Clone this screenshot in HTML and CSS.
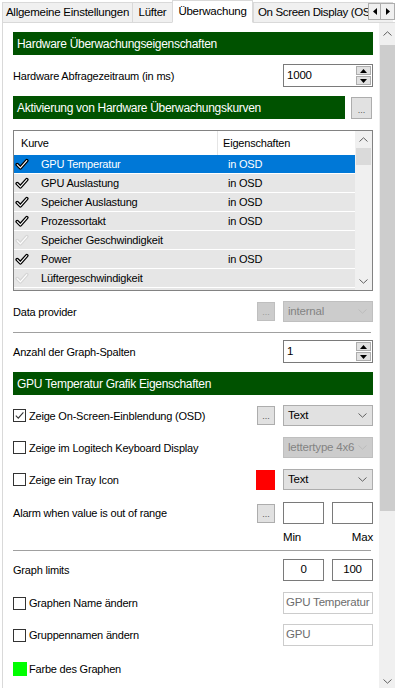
FILE: index.html
```html
<!DOCTYPE html>
<html lang="de">
<head>
<meta charset="utf-8">
<link rel="stylesheet" href="styles.css">
</head>
<body>
<div class="tabs">
  <div class="tab t1">Allgemeine Einstellungen</div>
  <div class="tab t2">Lüfter</div>
  <div class="tab active t3">Überwachung</div>
  <div class="tab t4">On Screen Display (OSD)</div>
  <div class="tabfill"></div>
  <div class="tabarrows">
    <span class="tarr"><svg width="4" height="7" viewBox="0 0 4 7"><path d="M4 0 L0 3.5 L4 7 Z" fill="#000"/></svg></span>
    <span class="tarr"><svg width="4" height="7" viewBox="0 0 4 7"><path d="M0 0 L4 3.5 L0 7 Z" fill="#000"/></svg></span>
  </div>
</div>
<div class="main">
  <div class="page">
    <div class="ghead">Hardware Überwachungseigenschaften</div>

    <div class="row r-poll">
      <span class="lbl">Hardware Abfragezeitraum (in ms)</span>
      <span></span>
      <div class="spin"><span class="spinval">1000</span><span class="spinbtns"><span class="sb"><svg width="7" height="4" viewBox="0 0 7 4"><path d="M0 4 L3.5 0 L7 4 Z" fill="#000"/></svg></span><span class="sb"><svg width="7" height="4" viewBox="0 0 7 4"><path d="M0 0 L3.5 4 L7 0 Z" fill="#000"/></svg></span></span></div>
    </div>

    <div class="hrow">
      <div class="ghead ghead-short">Aktivierung von Hardware Überwachungskurven</div>
      <div class="btn btn-big">...</div>
    </div>

    <div class="list">
      <div class="lcols">
        <div class="lhead"><span class="hc1">Kurve</span><span class="hc2">Eigenschaften</span></div>
        <div class="lrow sel"><span class="c1"><svg class="chk" width="14" height="13" viewBox="0 0 14 13"><path d="M2.2 6.6 L5.4 9.8 L11.8 2.6" fill="none" stroke="#000" stroke-width="3.6" stroke-linecap="round" stroke-linejoin="round"/><path d="M2.2 6.6 L5.4 9.8 L11.8 2.6" fill="none" stroke="#fff" stroke-width="1.1" stroke-linecap="round" stroke-linejoin="round"/></svg><span class="ltxt">GPU Temperatur</span></span><span class="c2">in OSD</span></div>
        <div class="lrow"><span class="c1"><svg class="chk" width="14" height="13" viewBox="0 0 14 13"><path d="M2.2 6.6 L5.4 9.8 L11.8 2.6" fill="none" stroke="#000" stroke-width="3.6" stroke-linecap="round" stroke-linejoin="round"/><path d="M2.2 6.6 L5.4 9.8 L11.8 2.6" fill="none" stroke="#fff" stroke-width="1.1" stroke-linecap="round" stroke-linejoin="round"/></svg><span class="ltxt">GPU Auslastung</span></span><span class="c2">in OSD</span></div>
        <div class="lrow"><span class="c1"><svg class="chk" width="14" height="13" viewBox="0 0 14 13"><path d="M2.2 6.6 L5.4 9.8 L11.8 2.6" fill="none" stroke="#000" stroke-width="3.6" stroke-linecap="round" stroke-linejoin="round"/><path d="M2.2 6.6 L5.4 9.8 L11.8 2.6" fill="none" stroke="#fff" stroke-width="1.1" stroke-linecap="round" stroke-linejoin="round"/></svg><span class="ltxt">Speicher Auslastung</span></span><span class="c2">in OSD</span></div>
        <div class="lrow"><span class="c1"><svg class="chk" width="14" height="13" viewBox="0 0 14 13"><path d="M2.2 6.6 L5.4 9.8 L11.8 2.6" fill="none" stroke="#000" stroke-width="3.6" stroke-linecap="round" stroke-linejoin="round"/><path d="M2.2 6.6 L5.4 9.8 L11.8 2.6" fill="none" stroke="#fff" stroke-width="1.1" stroke-linecap="round" stroke-linejoin="round"/></svg><span class="ltxt">Prozessortakt</span></span><span class="c2">in OSD</span></div>
        <div class="lrow"><span class="c1"><svg class="chk" width="14" height="13" viewBox="0 0 14 13"><path d="M2.2 6.6 L5.4 9.8 L11.8 2.6" fill="none" stroke="#d6d6d6" stroke-width="3.6" stroke-linecap="round" stroke-linejoin="round"/><path d="M2.2 6.6 L5.4 9.8 L11.8 2.6" fill="none" stroke="#fff" stroke-width="1.1" stroke-linecap="round" stroke-linejoin="round"/></svg><span class="ltxt">Speicher Geschwindigkeit</span></span><span class="c2"></span></div>
        <div class="lrow"><span class="c1"><svg class="chk" width="14" height="13" viewBox="0 0 14 13"><path d="M2.2 6.6 L5.4 9.8 L11.8 2.6" fill="none" stroke="#000" stroke-width="3.6" stroke-linecap="round" stroke-linejoin="round"/><path d="M2.2 6.6 L5.4 9.8 L11.8 2.6" fill="none" stroke="#fff" stroke-width="1.1" stroke-linecap="round" stroke-linejoin="round"/></svg><span class="ltxt">Power</span></span><span class="c2">in OSD</span></div>
        <div class="lrow"><span class="c1"><svg class="chk" width="14" height="13" viewBox="0 0 14 13"><path d="M2.2 6.6 L5.4 9.8 L11.8 2.6" fill="none" stroke="#d6d6d6" stroke-width="3.6" stroke-linecap="round" stroke-linejoin="round"/><path d="M2.2 6.6 L5.4 9.8 L11.8 2.6" fill="none" stroke="#fff" stroke-width="1.1" stroke-linecap="round" stroke-linejoin="round"/></svg><span class="ltxt">Lüftergeschwindigkeit</span></span><span class="c2"></span></div>
        <div class="lrow"><span class="c1"><svg class="chk" width="14" height="13" viewBox="0 0 14 13"><path d="M2.2 6.6 L5.4 9.8 L11.8 2.6" fill="none" stroke="#000" stroke-width="3.6" stroke-linecap="round" stroke-linejoin="round"/><path d="M2.2 6.6 L5.4 9.8 L11.8 2.6" fill="none" stroke="#fff" stroke-width="1.1" stroke-linecap="round" stroke-linejoin="round"/></svg></span><span class="c2"></span></div>
      </div>
      <div class="lscroll">
        <span class="sarrow"><svg width="9" height="5" viewBox="0 0 9 5"><path d="M0.5 4.5 L4.5 0.8 L8.5 4.5" fill="none" stroke="#606060" stroke-width="1"/></svg></span>
        <span class="lthumb"></span>
        <span class="lspace"></span>
        <span class="sarrow"><svg width="9" height="5" viewBox="0 0 9 5"><path d="M0.5 0.5 L4.5 4.2 L8.5 0.5" fill="none" stroke="#606060" stroke-width="1"/></svg></span>
      </div>
    </div>

    <div class="row r-prov">
      <span class="lbl">Data provider</span>
      <div class="btn btn-dis">...</div>
      <div class="combo combo-dis"><span>internal</span><svg width="9" height="5" viewBox="0 0 9 5"><path d="M0.5 0.5 L4.5 4.2 L8.5 0.5" fill="none" stroke="#bcbcbc" stroke-width="1"/></svg></div>
    </div>

    <div class="sep sep1"></div>

    <div class="row r-cols">
      <span class="lbl">Anzahl der Graph-Spalten</span>
      <span></span>
      <div class="spin"><span class="spinval">1</span><span class="spinbtns"><span class="sb"><svg width="7" height="4" viewBox="0 0 7 4"><path d="M0 4 L3.5 0 L7 4 Z" fill="#000"/></svg></span><span class="sb"><svg width="7" height="4" viewBox="0 0 7 4"><path d="M0 0 L3.5 4 L7 0 Z" fill="#000"/></svg></span></span></div>
    </div>

    <div class="ghead ghead3">GPU Temperatur Grafik Eigenschaften</div>

    <div class="row r-osd">
      <span class="lbl cbl"><span class="cb"><svg width="11" height="11" viewBox="0 0 11 11"><path d="M1.8 5.6 L4.3 8.1 L9.4 2.4" fill="none" stroke="#333" stroke-width="1.1"/></svg></span>Zeige On-Screen-Einblendung (OSD)</span>
      <div class="btn">...</div>
      <div class="combo"><span>Text</span><svg width="9" height="5" viewBox="0 0 9 5"><path d="M0.5 0.5 L4.5 4.2 L8.5 0.5" fill="none" stroke="#606060" stroke-width="1"/></svg></div>
    </div>

    <div class="row r-logi">
      <span class="lbl cbl"><span class="cb"></span>Zeige im Logitech Keyboard Display</span>
      <span></span>
      <div class="combo combo-dis"><span>lettertype 4x6</span><svg width="9" height="5" viewBox="0 0 9 5"><path d="M0.5 0.5 L4.5 4.2 L8.5 0.5" fill="none" stroke="#bcbcbc" stroke-width="1"/></svg></div>
    </div>

    <div class="row r-tray">
      <span class="lbl cbl"><span class="cb"></span>Zeige ein Tray Icon</span>
      <div class="swatch-red"></div>
      <div class="combo"><span>Text</span><svg width="9" height="5" viewBox="0 0 9 5"><path d="M0.5 0.5 L4.5 4.2 L8.5 0.5" fill="none" stroke="#606060" stroke-width="1"/></svg></div>
    </div>

    <div class="row r-alarm">
      <span class="lbl">Alarm when value is out of range</span>
      <div class="btn">...</div>
      <div class="pair"><span class="box"></span><span class="box"></span></div>
    </div>

    <div class="row r-minmax">
      <span></span>
      <span></span>
      <div class="minmax"><span>Min</span><span>Max</span></div>
    </div>

    <div class="sep sep2"></div>

    <div class="row r-limits">
      <span class="lbl">Graph limits</span>
      <span></span>
      <div class="pair"><span class="box">0</span><span class="box">100</span></div>
    </div>

    <div class="row r-name">
      <span class="lbl cbl"><span class="cb"></span>Graphen Name ändern</span>
      <span></span>
      <div class="tbox-dis">GPU Temperatur</div>
    </div>

    <div class="row r-group">
      <span class="lbl cbl"><span class="cb"></span>Gruppennamen ändern</span>
      <span></span>
      <div class="tbox-dis">GPU</div>
    </div>

    <div class="colorrow"><span class="swatch-green"></span>Farbe des Graphen</div>
  </div>

  <div class="vscroll">
    <span class="varrow varrow-up"><svg width="9" height="5" viewBox="0 0 9 5"><path d="M0.5 4.5 L4.5 0.8 L8.5 4.5" fill="none" stroke="#606060" stroke-width="1"/></svg></span>
    <span class="vthumb"></span>
    <span class="vspace"></span>
    <span class="varrow"><svg width="9" height="5" viewBox="0 0 9 5"><path d="M0.5 0.5 L4.5 4.2 L8.5 0.5" fill="none" stroke="#606060" stroke-width="1"/></svg></span>
  </div>
</div>
</body>
</html>
```

FILE: styles.css
```css
* { box-sizing: border-box; }

body {
  margin: 0;
  width: 395px;
  height: 688px;
  overflow: hidden;
  background: #fff;
  font-family: "Liberation Sans", Arial, sans-serif;
  font-size: 11px;
  letter-spacing: -0.2px;
  color: #000;
}

/* ---------- tab strip ---------- */
.tabs {
  position: relative;
  display: flex;
  align-items: flex-end;
  height: 23px;
  padding-left: 2px;
  overflow: hidden;
}

.tab {
  flex: none;
  height: 21px;
  display: flex;
  align-items: center;
  justify-content: center;
  background: #f0f0f0;
  border: 1px solid #d9d9d9;
  border-right: none;
  white-space: nowrap;
  font-size: 11.5px;
  letter-spacing: -0.25px;
  padding-bottom: 1px;
}

.t1 { width: 130px; }
.t2 { width: 40px; }
.t3 { width: 81px; }
.t4 { width: 140px; justify-content: flex-start; padding-left: 4px; letter-spacing: -0.35px; }

.tab.active {
  height: 23px;
  background: #fff;
  border-right: 1px solid #d9d9d9;
  border-bottom-color: #fff;
  padding-bottom: 2px;
}

.tabfill {
  flex: 1;
  height: 1px;
  background: #d9d9d9;
}

.tabarrows {
  position: absolute;
  top: 3px;
  right: 0;
  display: flex;
  background: #fff;
}

.tarr {
  width: 13px;
  height: 17px;
  display: flex;
  align-items: center;
  justify-content: center;
  background: #f0f0f0;
  border: 1px solid #adadad;
}
.tarr + .tarr { width: 14px; border-left: none; }

/* ---------- main ---------- */
.main {
  display: flex;
  height: 667px;
  padding-left: 2px;
}

.page {
  width: 377px;
  border-left: 1px solid #d9d9d9;
  padding: 9px 6px 0 10px;
  display: flex;
  flex-direction: column;
}

.ghead {
  height: 23px;
  background: #005200;
  color: #fff;
  font-size: 12px;
  letter-spacing: -0.3px;
  padding-left: 4px;
  display: flex;
  align-items: center;
  white-space: nowrap;
}

.hrow {
  display: flex;
  align-items: center;
  margin-top: 9px;
  height: 23px;
}
.ghead-short { width: 332px; }

.row {
  display: grid;
  grid-template-columns: 1fr 18px 90px;
  column-gap: 8px;
  align-items: center;
}

.lbl { white-space: nowrap; }

.cbl { display: flex; align-items: center; }

.cb {
  width: 13px;
  height: 13px;
  border: 1px solid #333;
  background: #fff;
  margin-right: 3px;
  display: flex;
  align-items: center;
  justify-content: center;
  flex: none;
}

.r-poll { margin-top: 9px; height: 23px; }
.r-prov { margin-top: 10px; height: 21px; }
.r-cols { margin-top: 7px; height: 23px; }
.ghead3 { margin-top: 9px; }
.r-osd { margin-top: 10px; height: 21px; }
.r-logi { margin-top: 11px; height: 21px; }
.r-tray { margin-top: 11px; height: 21px; }
.r-alarm { margin-top: 12px; height: 22px; }
.r-minmax { margin-top: 5px; height: 15px; }
.r-limits { margin-top: 8px; height: 22px; }
.r-name { margin-top: 11px; height: 22px; }
.r-group { margin-top: 10px; height: 22px; }

.sep { height: 1px; background: #a0a0a0; width: 358px; }
.sep1 { margin-top: 10px; }
.sep2 { margin-top: 6px; }

/* spin box */
.spin {
  height: 23px;
  border: 1px solid #7a7a7a;
  background: #fff;
  display: flex;
  align-items: center;
  justify-content: space-between;
  padding: 0 1px 0 3px;
}
.spinval { padding-bottom: 2px; font-size: 11.5px; }
.spinbtns {
  display: flex;
  flex-direction: column;
  gap: 1px;
  width: 15px;
}
.sb {
  height: 9px;
  background: #e1e1e1;
  border: 1px solid #adadad;
  display: flex;
  align-items: center;
  justify-content: center;
}

/* buttons */
.btn {
  width: 18px;
  height: 19px;
  background: #e1e1e1;
  border: 1px solid #adadad;
  color: #555;
  font-size: 9px;
  letter-spacing: 0;
  display: flex;
  align-items: flex-end;
  justify-content: center;
  padding-bottom: 3px;
  line-height: 1;
}
.btn-big { width: 21px; height: 22px; margin-left: 6px; }
.btn-dis { background: #cccccc; border-color: #bfbfbf; color: #9a9a9a; }

/* combo */
.combo {
  height: 21px;
  background: #e1e1e1;
  border: 1px solid #adadad;
  display: flex;
  align-items: center;
  justify-content: space-between;
  padding: 0 5px 1px 4px;
  font-size: 11.5px;
  white-space: nowrap;
}
.combo svg { flex: none; margin-top: 1px; }
.combo-dis { background: #cccccc; border-color: #bfbfbf; color: #838383; }

.swatch-red {
  width: 19px;
  height: 20px;
  background: #ff0000;
  margin-left: -1px;
}

.pair {
  display: flex;
  justify-content: space-between;
  height: 22px;
}
.box {
  width: 41px;
  height: 22px;
  border: 1px solid #7a7a7a;
  background: #fff;
  display: flex;
  align-items: center;
  justify-content: center;
  padding-bottom: 3px;
  font-size: 11.5px;
}

.minmax {
  display: flex;
  justify-content: space-between;
  font-size: 11.5px;
}

.tbox-dis {
  height: 22px;
  border: 1px solid #cccccc;
  background: #fff;
  color: #6d6d6d;
  padding: 3px 0 0 2px;
  white-space: nowrap;
  font-size: 11.5px;
}

.colorrow {
  margin-top: 15px;
  height: 15px;
  display: flex;
  align-items: center;
}
.swatch-green {
  width: 14px;
  height: 14px;
  background: #00ff00;
  margin-right: 2px;
}

/* ---------- list ---------- */
.list {
  margin-top: 11px;
  height: 161px;
  width: 360px;
  border: 1px solid #828282;
  display: flex;
  overflow: hidden;
}

.lcols { width: 341px; flex: none; }

.lhead {
  height: 24px;
  display: flex;
  align-items: center;
  background: #fff;
}
.hc1 {
  width: 204px;
  height: 100%;
  display: flex;
  align-items: center;
  padding-left: 7px;
  border-right: 1px solid #e5e5e5;
}
.hc2 { padding-left: 5px; }

.lrow {
  height: 19px;
  border-bottom: 1px solid #fff;
  background: #e6e6e6;
  display: flex;
  align-items: center;
}
.lrow.sel { background: #0078d7; color: #fff; }

.c1 {
  width: 214px;
  display: flex;
  align-items: center;
}
.chk { margin-left: 1px; margin-right: 12px; flex: none; }

.lscroll {
  width: 17px;
  background: #f0f0f0;
  display: flex;
  flex-direction: column;
}
.sarrow {
  height: 17px;
  flex: none;
  display: flex;
  align-items: center;
  justify-content: center;
}
.lthumb {
  height: 17px;
  margin: 0 1px;
  background: #dadada;
  flex: none;
}
.lspace { flex: 1; }

/* ---------- page scrollbar ---------- */
.vscroll {
  width: 16px;
  background: #f0f0f0;
  display: flex;
  flex-direction: column;
}
.varrow {
  height: 17px;
  flex: none;
  display: flex;
  align-items: center;
  justify-content: center;
}
.varrow-up { height: 21px; }
.vthumb {
  height: 466px;
  margin: 1px 0 0 1px;
  background: #cdcdcd;
  flex: none;
}
.vspace { flex: 1; }
```
